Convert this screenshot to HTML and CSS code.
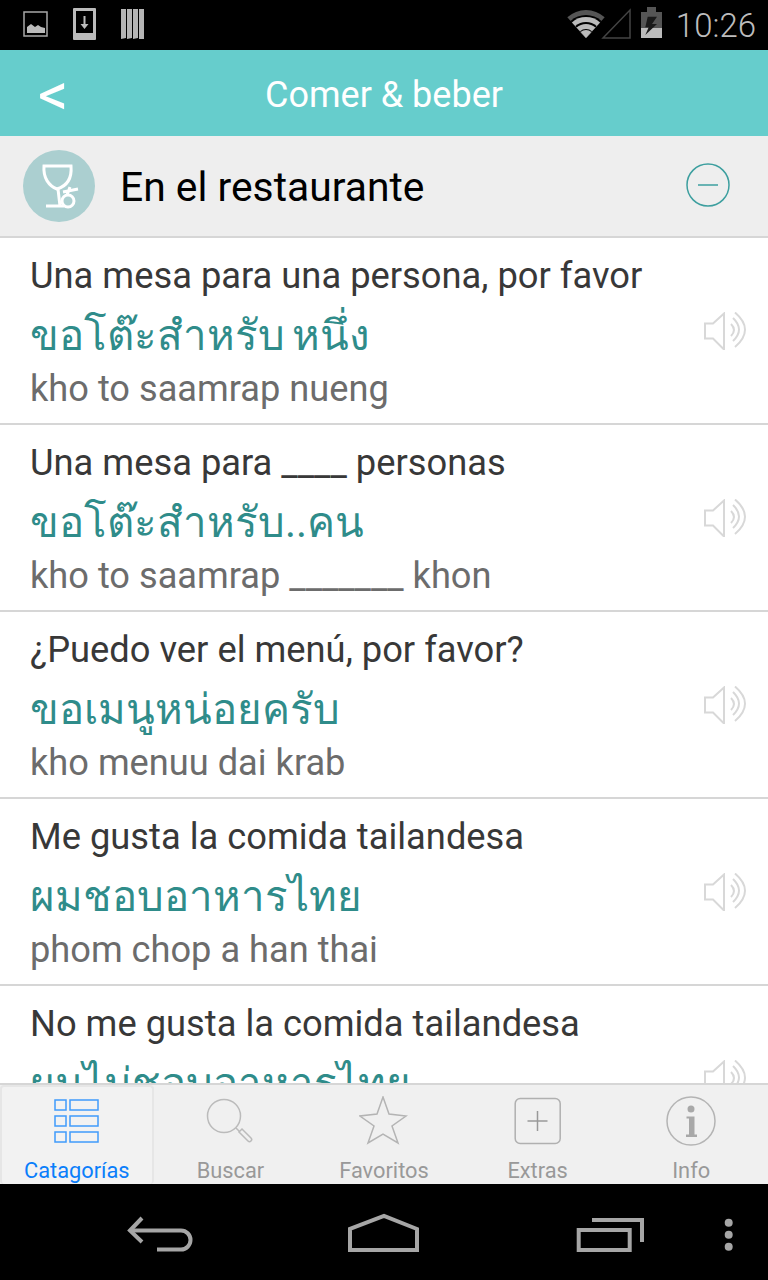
FILE: index.html
```html
<!DOCTYPE html>
<html>
<head>
<title>Comer &amp; beber</title>
<meta charset='UTF-8'>
<link rel="stylesheet" href="styles.css">
</head>
<body>

<div class="status">
	<svg class="st-left" width="130" height="36" viewBox="0 0 130 36">
		<rect x="1" y="5" width="23" height="24" fill="none" stroke="#a8a8a8" stroke-width="1.5"/>
		<path d="M4 26V20l4-3 4 3 3-2 3 2 4 1v5z" fill="#bbb"/>
		<path d="M51 1h21a1 1 0 0 1 1 1v30a1 1 0 0 1-1 1H51a1 1 0 0 1-1-1V2a1 1 0 0 1 1-1z" fill="#bbb"/>
		<rect x="53" y="4" width="17" height="22" fill="#000"/>
		<path d="M60.500 9h2v8h3l-4 5-4-5h3z" fill="#bbb"/>
		<path d="M98 2h5v29l-5 1zM104 2h5v29l-5 1zM110 2h5v29l-5 1zM116 2h5v30h-5z" fill="#b5b5b5"/>
	</svg>
	<svg class="st-right" width="100" height="40" viewBox="0 0 100 40">
		<path d="M22 33L3.300 12.200A28 28 0 0 1 40.700 12.200Z" fill="#555"/>
		<path d="M22 33L6.600 15.900A23 23 0 0 1 37.400 15.900Z" fill="#000"/>
		<path d="M22 33L7.900 17.400A21 21 0 0 1 36.100 17.400Z" fill="#bbb"/>
		<path d="M22 33L11.300 21.100A16 16 0 0 1 32.700 21.100Z" fill="#000"/>
		<path d="M22 33L12.600 22.600A14 14 0 0 1 31.400 22.600Z" fill="#bbb"/>
		<path d="M22 33L16 26.300A9 9 0 0 1 28 26.300Z" fill="#000"/>
		<path d="M22 33L16.600 27.100A8 8 0 0 1 27.400 27.100Z" fill="#bbb"/>
		<path d="M39 33L66 5V33Z" fill="none" stroke="#444" stroke-width="1.500"/>
		<rect x="83" y="2" width="9" height="5" fill="#555"/>
		<rect x="77" y="7" width="21" height="16" fill="#555"/>
		<rect x="77" y="23" width="21" height="10" fill="#bbb"/>
		<path d="M83.700 11.700H93L88 19H93L81.300 30L84.700 22.300H81.300Z" fill="#1a1a1a"/>
	</svg>
	<span class="clock">10:26</span>
</div>

<div class="titlebar">
	<span class="back">&lt;</span>
	<span class="title">Comer &amp; beber</span>
</div>

<div class="section">
	<div class="sec-icon">
		<svg width="72" height="72" viewBox="0 0 72 72" fill="none" stroke="#fff" stroke-width="3">
			<path d="M21 16H48C49 28 44 36 34 39C26 36 20 28 21 16Z"/>
			<path d="M35 39L37 56M23 56H41"/>
			<circle cx="45" cy="51" r="6" fill="#abcfd0"/>
			<path d="M40 42L55 39M47 37L44 45"/>
		</svg>
	</div>
	<span class="sec-name">En el restaurante</span>
	<svg class="minus" width="44" height="44" viewBox="0 0 44 44">
		<circle cx="22" cy="22" r="21" fill="none" stroke="#3d9f9f" stroke-width="1.500"/>
		<path d="M12 22h20" stroke="#3d9f9f" stroke-width="1.500"/>
	</svg>
</div>

<div class="list">
	<div class="row">
		<div class="texts">
			<p class="es">Una mesa para una persona, por favor</p>
			<p class="th">ขอโต๊ะสำหรับ หนึ่ง</p>
			<p class="ph">kho to saamrap nueng</p>
		</div>
		<svg class="spk" width="42" height="38" viewBox="0 0 42 38"><use href="#speaker"/></svg>
	</div>
	<div class="row">
		<div class="texts">
			<p class="es">Una mesa para ____ personas</p>
			<p class="th">ขอโต๊ะสำหรับ..คน</p>
			<p class="ph">kho to saamrap _______ khon</p>
		</div>
		<svg class="spk" width="42" height="38" viewBox="0 0 42 38"><use href="#speaker"/></svg>
	</div>
	<div class="row">
		<div class="texts">
			<p class="es">¿Puedo ver el menú, por favor?</p>
			<p class="th">ขอเมนูหน่อยครับ</p>
			<p class="ph">kho menuu dai krab</p>
		</div>
		<svg class="spk" width="42" height="38" viewBox="0 0 42 38"><use href="#speaker"/></svg>
	</div>
	<div class="row">
		<div class="texts">
			<p class="es">Me gusta la comida tailandesa</p>
			<p class="th">ผมชอบอาหารไทย</p>
			<p class="ph">phom chop a han thai</p>
		</div>
		<svg class="spk" width="42" height="38" viewBox="0 0 42 38"><use href="#speaker"/></svg>
	</div>
	<div class="row">
		<div class="texts">
			<p class="es">No me gusta la comida tailandesa</p>
			<p class="th">ผมไม่ชอบอาหารไทย</p>
			<p class="ph">phom mai chop a han thai</p>
		</div>
		<svg class="spk" width="42" height="38" viewBox="0 0 42 38"><use href="#speaker"/></svg>
	</div>
</div>

<div class="tabs">
	<div class="tab on">
		<svg width="50" height="50" viewBox="0 0 50 50" fill="none" stroke="#3f9bfb" stroke-width="1.500">
			<rect x="3" y="4" width="11" height="10"/><rect x="18" y="4" width="28" height="10"/>
			<rect x="3" y="20" width="11" height="10"/><rect x="18" y="20" width="28" height="10"/>
			<rect x="3" y="36" width="11" height="10"/><rect x="18" y="36" width="28" height="10"/>
		</svg>
		<span>Catagorías</span>
	</div>
	<div class="tab">
		<svg width="50" height="50" viewBox="0 0 50 50" fill="none" stroke="#bbb" stroke-width="1.500">
			<circle cx="19" cy="20" r="16.500"/>
			<path d="M31 32l3 3M34 36l3-3 9 9a1.500 1.500 0 0 1-3 3z"/>
		</svg>
		<span>Buscar</span>
	</div>
	<div class="tab">
		<svg width="50" height="50" viewBox="0 0 50 50" fill="none" stroke="#b4b4b4" stroke-width="1.500">
			<path d="M24 1L30 18L47 20L33 30L39 47L24 38L9 47L15 30L1 20L18 18Z"/>
		</svg>
		<span>Favoritos</span>
	</div>
	<div class="tab">
		<svg width="50" height="50" viewBox="0 0 50 50" fill="none" stroke="#b0b0b0" stroke-width="1.500">
			<rect x="2.200" y="2.500" width="45" height="45" rx="5"/>
			<path d="M24.500 15v20M14.500 25h20" stroke="#999"/>
		</svg>
		<span>Extras</span>
	</div>
	<div class="tab">
		<svg width="50" height="50" viewBox="0 0 50 50" fill="none" stroke="#b4b4b4" stroke-width="1.500">
			<circle cx="25" cy="25" r="24"/>
			<circle cx="25" cy="13" r="3.500" fill="#a8a8a8" stroke="none"/>
			<path d="M20.500 20.500H28.500V38.500H31V41H20V38.500H23V22.500H20.500Z" fill="#a8a8a8" stroke="none"/>
		</svg>
		<span>Info</span>
	</div>
</div>

<div class="nav">
	<svg width="768" height="96" viewBox="0 0 768 96" fill="none" stroke="#a6a6a6" stroke-width="4">
		<path d="M142 34L130 46.500L142 58"/>
		<path d="M131 46.500H181a9.500 9.500 0 0 1 0 19H157"/>
		<path d="M350 66V45L384 32L417 45V66Z"/>
		<path d="M578.700 46H629.700V66H578.700Z"/>
		<path d="M592 36H642V58"/>
		<g fill="#a6a6a6" stroke="none">
			<circle cx="728.700" cy="38.700" r="4"/><circle cx="728.700" cy="50.700" r="4"/><circle cx="728.700" cy="62.700" r="4"/>
		</g>
	</svg>
</div>

<svg class="defs" width="0" height="0">
	<defs>
		<g id="speaker" fill="none" stroke="#d8d8d8" stroke-width="2">
			<path d="M1 11.500H9L20 1.500V37.500L9 26.500H1Z"/>
			<path d="M27 12Q33 18 27 24M29 6Q41 17.500 29 29M31 0.500Q51 17.500 31 35"/>
		</g>
	</defs>
</svg>

</body>
</html>
```

FILE: styles.css
```css
* {box-sizing: border-box}

body {
	margin: 0;
	width: 768px;
	height: 1280px;
	display: flex;
	flex-direction: column;
	overflow: hidden;
	background: #000;
	font-family: Roboto, "Noto Sans", sans-serif;
}

p {margin: 0}

.status {
	height: 50px;
	background: #000;
	display: flex;
	align-items: center;
	padding: 0 12px 0 23px;
}

.st-left {display: block}

.st-right {
	margin-left: auto;
	display: block;
}

.clock {
	color: #bdbdbd;
	font-size: 33px;
	font-weight: 300;
	margin-left: 12px;
}

.titlebar {
	height: 86px;
	background: #66cdcc;
	display: grid;
	grid-template-columns: 1fr auto 1fr;
	align-items: center;
}

.back {
	margin: 0 0 0 38px;
	padding-top: 4px;
	color: #fff;
	font-size: 60px;
	line-height: 82px;
}

.title {
	color: #fff;
	font-size: 36px;
	font-weight: 400;
	padding-top: 4px;
}

.section {
	height: 102px;
	background: #eee;
	border-bottom: 2px solid #d6d6d6;
	display: flex;
	align-items: center;
	padding: 0 38px 0 23px;
}

.sec-icon {
	width: 72px;
	height: 72px;
	border-radius: 50%;
	background: #abcfd0;
}

.sec-icon svg {display: block}

.sec-name {
	font-size: 40.800px;
	color: #000;
	margin: 2px 0 0 25px;
}

.minus {margin: 0 0 2px auto}

.list {
	flex: 1;
	background: #fff;
	overflow: hidden;
}

.row {
	height: 187px;
	border-bottom: 2px solid #d6d6d6;
	display: flex;
	align-items: center;
	padding: 0 22px 0 30px;
}

.texts {
	flex: 1;
	padding-top: 4px;
}

.es {
	font-size: 36.300px;
	line-height: 40px;
	color: #383838;
}

.th {
	font-size: 42px;
	line-height: 60px;
	color: #2f8c8a;
	margin: 10px 0 0;
	word-spacing: -3px;
}

.ph {
	font-size: 36.200px;
	line-height: 40px;
	color: #6c6c6c;
	margin-top: 3px;
}

.spk {display: block}

.tabs {
	height: 101px;
	background: #f0f0f0;
	border-top: 2px solid #d6d6d6;
	display: flex;
}

.tab {
	flex: 0 0 20%;
	display: flex;
	flex-direction: column;
	align-items: center;
	padding-top: 11px;
	color: #999;
	font-size: 21.800px;
}

.tab svg {display: block}

.tab span {margin-top: 12px}

.tab.on {
	color: #0a7efb;
	border: 2px solid #e6e6e6;
	border-bottom: 0;
	border-radius: 4px;
	background: #f2f2f2;
	padding-top: 9px;
}

.nav {
	height: 96px;
	background: #000;
}

.nav svg {display: block}

.defs {position: absolute}
```
